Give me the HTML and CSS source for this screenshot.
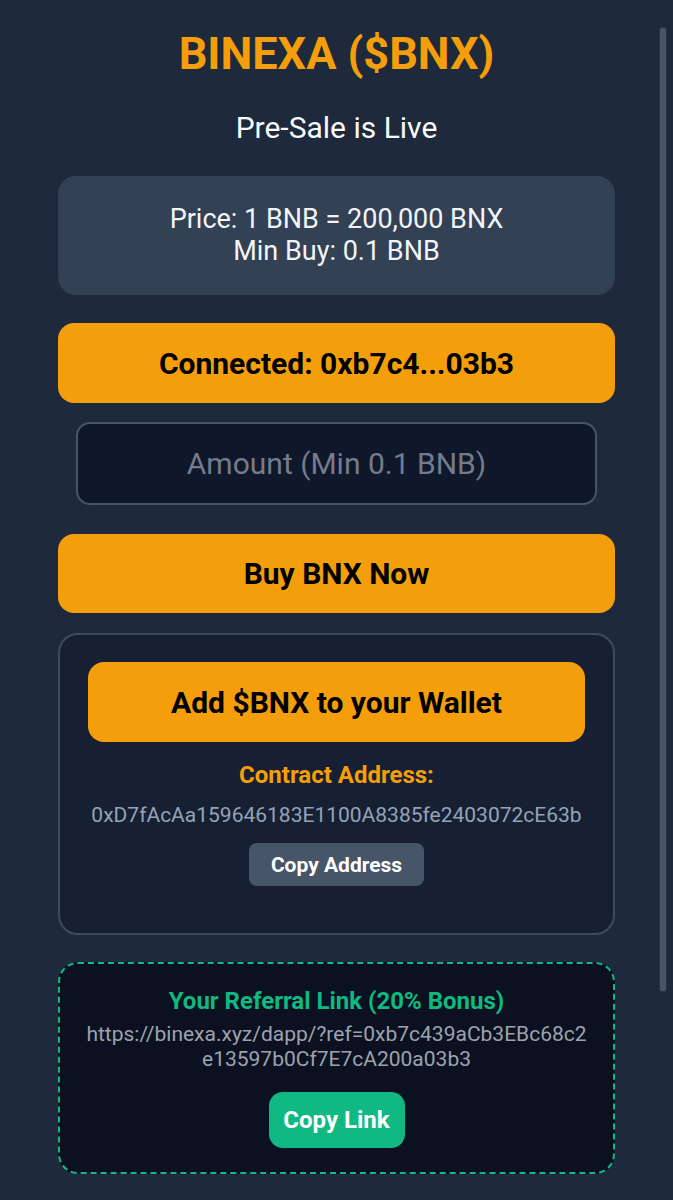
FILE: index.html
```html
<!doctype html>
<html>
<head>
<meta charset="utf-8">
<title>BINEXA ($BNX) Pre-Sale</title>
<meta name="viewport" content="width=device-width,initial-scale=1.0">
<link rel="stylesheet" href="styles.css">
</head>
<body>
<div id="wrap">
	<h1 class="title">BINEXA ($BNX)</h1>
	<p class="subtitle">Pre-Sale is Live</p>
	<div class="price_box">
		<p>Price: 1 BNB = 200,000 BNX</p>
		<p>Min Buy: 0.1 BNB</p>
	</div>
	<button class="btn_main">Connected: 0xb7c4...03b3</button>
	<input type="text" class="amount" placeholder="Amount (Min 0.1 BNB)">
	<button class="btn_main btn_buy">Buy BNX Now</button>
	<div class="wallet_box">
		<button class="btn_main btn_add">Add $BNX to your Wallet</button>
		<p class="contract_label">Contract Address:</p>
		<p class="contract_addr">0xD7fAcAa159646183E1100A8385fe2403072cE63b</p>
		<button class="btn_copy">Copy Address</button>
	</div>
	<div class="ref_box">
		<p class="ref_title">Your Referral Link (20% Bonus)</p>
		<p class="ref_link">https://binexa.xyz/dapp/?ref=0xb7c439aCb3EBc68c2e13597b0Cf7E7cA200a03b3</p>
		<button class="btn_link">Copy Link</button>
	</div>
</div>
<div class="scroll_bar"></div>
</body>
</html>
```

FILE: styles.css
```css
body,h1,p,div,button,input{margin: 0; padding: 0;}
html,body{background-color: #1e293b;}
body{font-family: Roboto, "Liberation Sans", sans-serif; color: #f1f5f9; overflow: hidden;}
button,input{font-family: inherit; border: 0; outline: 0;}

#wrap{
	display: flex;
	flex-direction: column;
	padding: 27px 58px 20px;
	text-align: center;
}
.title{
	font-size: 45px;
	font-weight: 700;
	color: #f59e0b;
	line-height: 53px;
}
.subtitle{
	margin-top: 31px;
	font-size: 30px;
	line-height: 34px;
	color: #f8fafc;
}
.price_box{
	margin-top: 31px;
	padding: 27px 0 28px;
	background-color: #334155;
	border-radius: 18px;
	font-size: 27px;
	line-height: 32px;
}
.btn_main{
	display: block;
	width: 100%;
	height: 80px;
	margin-top: 28px;
	background-color: #f59e0b;
	border-radius: 16px;
	color: #000;
	font-size: 30px;
	font-weight: 700;
}
.amount{
	display: block;
	height: 83px;
	margin: 19px 18px 0;
	box-sizing: border-box;
	background-color: #0f172a;
	border: 2px solid #475569;
	border-radius: 14px;
	text-align: center;
	font-size: 30px;
	color: #e2e8f0;
}
.amount::placeholder{
	color: #747c8b;
}
.btn_buy{
	margin-top: 29px;
	height: 79px;
}
.wallet_box{
	margin-top: 20px;
	padding: 27px 28px 47px;
	background-color: #172033;
	border: 2px solid #3f4a5c;
	border-radius: 20px;
}
.wallet_box .btn_add{
	margin-top: 0;
}
.contract_label{
	margin-top: 19px;
	font-size: 24px;
	font-weight: 700;
	line-height: 28px;
	color: #f59e0b;
}
.contract_addr{
	margin-top: 14px;
	font-size: 21px;
	line-height: 25px;
	color: #94a3b8;
}
.btn_copy{
	display: block;
	margin: 15px auto 0;
	width: 175px;
	height: 43px;
	background-color: #475569;
	border-radius: 8px;
	color: #fff;
	font-size: 21px;
	font-weight: 700;
}
.ref_box{
	margin-top: 27px;
	padding: 23px 22px 24px;
	background-color: #0b1120;
	border: 2px dashed #10b981;
	border-radius: 20px;
}
.ref_title{
	font-size: 24px;
	font-weight: 700;
	line-height: 28px;
	color: #10b981;
}
.ref_link{
	margin-top: 7px;
	font-size: 21px;
	line-height: 25px;
	color: #9ca3af;
	word-break: break-all;
}
.btn_link{
	display: block;
	margin: 20px auto 0;
	width: 136px;
	height: 56px;
	background-color: #10b981;
	border-radius: 14px;
	color: #fff;
	font-size: 24px;
	font-weight: 700;
}
/* scroll indicator over the page */
.scroll_bar{
	position: fixed;
	top: 27px;
	right: 6px;
	width: 6px;
	height: 963px;
	background-color: #4b5563;
	border: 1px solid #2a3342;
	border-radius: 3px;
}
```
